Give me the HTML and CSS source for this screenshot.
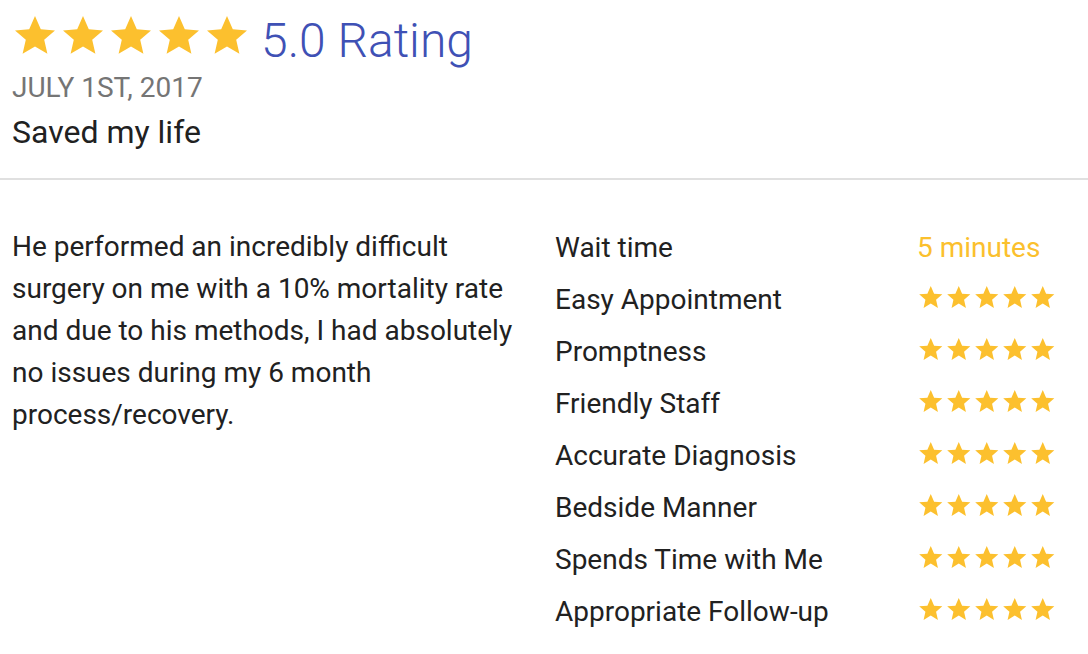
FILE: index.html
```html
<!DOCTYPE html>
<html lang="en">
<head>
    <meta charset="UTF-8">
    <meta name="viewport" content="width=device-width, initial-scale=1.0">
    <title>Review</title>
    <link rel="stylesheet" href="styles.css">
</head>
<body>
    <div class="review-head">
        <div class="rating-line">
            <span class="stars stars-big">
                <svg viewBox="2 2.5 20 19"><path d="M12 2.5l2.9 6.6 7.1.6-5.4 4.7 1.6 7-6.2-3.7-6.2 3.7 1.6-7L2 9.7l7.1-.6z"/></svg>
                <svg viewBox="2 2.5 20 19"><path d="M12 2.5l2.9 6.6 7.1.6-5.4 4.7 1.6 7-6.2-3.7-6.2 3.7 1.6-7L2 9.7l7.1-.6z"/></svg>
                <svg viewBox="2 2.5 20 19"><path d="M12 2.5l2.9 6.6 7.1.6-5.4 4.7 1.6 7-6.2-3.7-6.2 3.7 1.6-7L2 9.7l7.1-.6z"/></svg>
                <svg viewBox="2 2.5 20 19"><path d="M12 2.5l2.9 6.6 7.1.6-5.4 4.7 1.6 7-6.2-3.7-6.2 3.7 1.6-7L2 9.7l7.1-.6z"/></svg>
                <svg viewBox="2 2.5 20 19"><path d="M12 2.5l2.9 6.6 7.1.6-5.4 4.7 1.6 7-6.2-3.7-6.2 3.7 1.6-7L2 9.7l7.1-.6z"/></svg>
            </span>
            <span class="rating-text">5.0 Rating</span>
        </div>
        <div class="review-date">JULY 1ST, 2017</div>
        <div class="review-title">Saved my life</div>
    </div>

    <div class="review-body">
        <p class="review-text">He performed an incredibly difficult surgery on me with a 10% mortality rate and due to his methods, I had absolutely no issues during my 6 month process/recovery.</p>

        <div class="scores">
            <span class="score-label">Wait time</span>
            <span class="score-value">5 minutes</span>

            <span class="score-label">Easy Appointment</span>
            <span class="stars stars-small">
                <svg viewBox="2 2.5 20 19"><path d="M12 2.5l2.9 6.6 7.1.6-5.4 4.7 1.6 7-6.2-3.7-6.2 3.7 1.6-7L2 9.7l7.1-.6z"/></svg><svg viewBox="2 2.5 20 19"><path d="M12 2.5l2.9 6.6 7.1.6-5.4 4.7 1.6 7-6.2-3.7-6.2 3.7 1.6-7L2 9.7l7.1-.6z"/></svg><svg viewBox="2 2.5 20 19"><path d="M12 2.5l2.9 6.6 7.1.6-5.4 4.7 1.6 7-6.2-3.7-6.2 3.7 1.6-7L2 9.7l7.1-.6z"/></svg><svg viewBox="2 2.5 20 19"><path d="M12 2.5l2.9 6.6 7.1.6-5.4 4.7 1.6 7-6.2-3.7-6.2 3.7 1.6-7L2 9.7l7.1-.6z"/></svg><svg viewBox="2 2.5 20 19"><path d="M12 2.5l2.9 6.6 7.1.6-5.4 4.7 1.6 7-6.2-3.7-6.2 3.7 1.6-7L2 9.7l7.1-.6z"/></svg>
            </span>

            <span class="score-label">Promptness</span>
            <span class="stars stars-small">
                <svg viewBox="2 2.5 20 19"><path d="M12 2.5l2.9 6.6 7.1.6-5.4 4.7 1.6 7-6.2-3.7-6.2 3.7 1.6-7L2 9.7l7.1-.6z"/></svg><svg viewBox="2 2.5 20 19"><path d="M12 2.5l2.9 6.6 7.1.6-5.4 4.7 1.6 7-6.2-3.7-6.2 3.7 1.6-7L2 9.7l7.1-.6z"/></svg><svg viewBox="2 2.5 20 19"><path d="M12 2.5l2.9 6.6 7.1.6-5.4 4.7 1.6 7-6.2-3.7-6.2 3.7 1.6-7L2 9.7l7.1-.6z"/></svg><svg viewBox="2 2.5 20 19"><path d="M12 2.5l2.9 6.6 7.1.6-5.4 4.7 1.6 7-6.2-3.7-6.2 3.7 1.6-7L2 9.7l7.1-.6z"/></svg><svg viewBox="2 2.5 20 19"><path d="M12 2.5l2.9 6.6 7.1.6-5.4 4.7 1.6 7-6.2-3.7-6.2 3.7 1.6-7L2 9.7l7.1-.6z"/></svg>
            </span>

            <span class="score-label">Friendly Staff</span>
            <span class="stars stars-small">
                <svg viewBox="2 2.5 20 19"><path d="M12 2.5l2.9 6.6 7.1.6-5.4 4.7 1.6 7-6.2-3.7-6.2 3.7 1.6-7L2 9.7l7.1-.6z"/></svg><svg viewBox="2 2.5 20 19"><path d="M12 2.5l2.9 6.6 7.1.6-5.4 4.7 1.6 7-6.2-3.7-6.2 3.7 1.6-7L2 9.7l7.1-.6z"/></svg><svg viewBox="2 2.5 20 19"><path d="M12 2.5l2.9 6.6 7.1.6-5.4 4.7 1.6 7-6.2-3.7-6.2 3.7 1.6-7L2 9.7l7.1-.6z"/></svg><svg viewBox="2 2.5 20 19"><path d="M12 2.5l2.9 6.6 7.1.6-5.4 4.7 1.6 7-6.2-3.7-6.2 3.7 1.6-7L2 9.7l7.1-.6z"/></svg><svg viewBox="2 2.5 20 19"><path d="M12 2.5l2.9 6.6 7.1.6-5.4 4.7 1.6 7-6.2-3.7-6.2 3.7 1.6-7L2 9.7l7.1-.6z"/></svg>
            </span>

            <span class="score-label">Accurate Diagnosis</span>
            <span class="stars stars-small">
                <svg viewBox="2 2.5 20 19"><path d="M12 2.5l2.9 6.6 7.1.6-5.4 4.7 1.6 7-6.2-3.7-6.2 3.7 1.6-7L2 9.7l7.1-.6z"/></svg><svg viewBox="2 2.5 20 19"><path d="M12 2.5l2.9 6.6 7.1.6-5.4 4.7 1.6 7-6.2-3.7-6.2 3.7 1.6-7L2 9.7l7.1-.6z"/></svg><svg viewBox="2 2.5 20 19"><path d="M12 2.5l2.9 6.6 7.1.6-5.4 4.7 1.6 7-6.2-3.7-6.2 3.7 1.6-7L2 9.7l7.1-.6z"/></svg><svg viewBox="2 2.5 20 19"><path d="M12 2.5l2.9 6.6 7.1.6-5.4 4.7 1.6 7-6.2-3.7-6.2 3.7 1.6-7L2 9.7l7.1-.6z"/></svg><svg viewBox="2 2.5 20 19"><path d="M12 2.5l2.9 6.6 7.1.6-5.4 4.7 1.6 7-6.2-3.7-6.2 3.7 1.6-7L2 9.7l7.1-.6z"/></svg>
            </span>

            <span class="score-label">Bedside Manner</span>
            <span class="stars stars-small">
                <svg viewBox="2 2.5 20 19"><path d="M12 2.5l2.9 6.6 7.1.6-5.4 4.7 1.6 7-6.2-3.7-6.2 3.7 1.6-7L2 9.7l7.1-.6z"/></svg><svg viewBox="2 2.5 20 19"><path d="M12 2.5l2.9 6.6 7.1.6-5.4 4.7 1.6 7-6.2-3.7-6.2 3.7 1.6-7L2 9.7l7.1-.6z"/></svg><svg viewBox="2 2.5 20 19"><path d="M12 2.5l2.9 6.6 7.1.6-5.4 4.7 1.6 7-6.2-3.7-6.2 3.7 1.6-7L2 9.7l7.1-.6z"/></svg><svg viewBox="2 2.5 20 19"><path d="M12 2.5l2.9 6.6 7.1.6-5.4 4.7 1.6 7-6.2-3.7-6.2 3.7 1.6-7L2 9.7l7.1-.6z"/></svg><svg viewBox="2 2.5 20 19"><path d="M12 2.5l2.9 6.6 7.1.6-5.4 4.7 1.6 7-6.2-3.7-6.2 3.7 1.6-7L2 9.7l7.1-.6z"/></svg>
            </span>

            <span class="score-label">Spends Time with Me</span>
            <span class="stars stars-small">
                <svg viewBox="2 2.5 20 19"><path d="M12 2.5l2.9 6.6 7.1.6-5.4 4.7 1.6 7-6.2-3.7-6.2 3.7 1.6-7L2 9.7l7.1-.6z"/></svg><svg viewBox="2 2.5 20 19"><path d="M12 2.5l2.9 6.6 7.1.6-5.4 4.7 1.6 7-6.2-3.7-6.2 3.7 1.6-7L2 9.7l7.1-.6z"/></svg><svg viewBox="2 2.5 20 19"><path d="M12 2.5l2.9 6.6 7.1.6-5.4 4.7 1.6 7-6.2-3.7-6.2 3.7 1.6-7L2 9.7l7.1-.6z"/></svg><svg viewBox="2 2.5 20 19"><path d="M12 2.5l2.9 6.6 7.1.6-5.4 4.7 1.6 7-6.2-3.7-6.2 3.7 1.6-7L2 9.7l7.1-.6z"/></svg><svg viewBox="2 2.5 20 19"><path d="M12 2.5l2.9 6.6 7.1.6-5.4 4.7 1.6 7-6.2-3.7-6.2 3.7 1.6-7L2 9.7l7.1-.6z"/></svg>
            </span>

            <span class="score-label">Appropriate Follow-up</span>
            <span class="stars stars-small">
                <svg viewBox="2 2.5 20 19"><path d="M12 2.5l2.9 6.6 7.1.6-5.4 4.7 1.6 7-6.2-3.7-6.2 3.7 1.6-7L2 9.7l7.1-.6z"/></svg><svg viewBox="2 2.5 20 19"><path d="M12 2.5l2.9 6.6 7.1.6-5.4 4.7 1.6 7-6.2-3.7-6.2 3.7 1.6-7L2 9.7l7.1-.6z"/></svg><svg viewBox="2 2.5 20 19"><path d="M12 2.5l2.9 6.6 7.1.6-5.4 4.7 1.6 7-6.2-3.7-6.2 3.7 1.6-7L2 9.7l7.1-.6z"/></svg><svg viewBox="2 2.5 20 19"><path d="M12 2.5l2.9 6.6 7.1.6-5.4 4.7 1.6 7-6.2-3.7-6.2 3.7 1.6-7L2 9.7l7.1-.6z"/></svg><svg viewBox="2 2.5 20 19"><path d="M12 2.5l2.9 6.6 7.1.6-5.4 4.7 1.6 7-6.2-3.7-6.2 3.7 1.6-7L2 9.7l7.1-.6z"/></svg>
            </span>
        </div>
    </div>
</body>
</html>
```

FILE: styles.css
```css
body {
    font-family: Roboto, 'Noto Sans', sans-serif;
    margin: 0;
    background-color: #fff;
    color: #212121;
}
.review-head {
    padding: 16px 12px 24px;
    border-bottom: 2px solid #e0e0e0;
}
.rating-line {
    display: flex;
    align-items: flex-start;
    height: 50px;
}
.stars {
    display: flex;
    fill: #fcc02e;
}
.stars-big {
    gap: 8px;
    margin: 0 14px 0 3px;
}
.stars-big svg {
    width: 40px;
    height: 38px;
}
.rating-text {
    font-size: 48px;
    font-weight: 300;
    line-height: 50px;
    color: #3f51b5;
}
.review-date {
    font-size: 28px;
    line-height: 44px;
    color: #757575;
}
.review-title {
    font-size: 32px;
    line-height: 44px;
}
.review-body {
    display: grid;
    grid-template-columns: 543px 1fr;
    padding: 46px 12px 0;
}
.review-text {
    margin: 0;
    width: 515px;
    font-size: 28px;
    line-height: 42px;
}
.scores {
    display: grid;
    grid-template-columns: 362px 1fr;
    grid-auto-rows: 52px;
    align-items: center;
    margin-top: -5px;
    font-size: 28px;
}
.score-value {
    color: #fbc02d;
}
.stars-small {
    gap: 4.5px;
    margin: -4px 0 0 2px;
}
.stars-small svg {
    width: 23.5px;
    height: 22px;
}
```
